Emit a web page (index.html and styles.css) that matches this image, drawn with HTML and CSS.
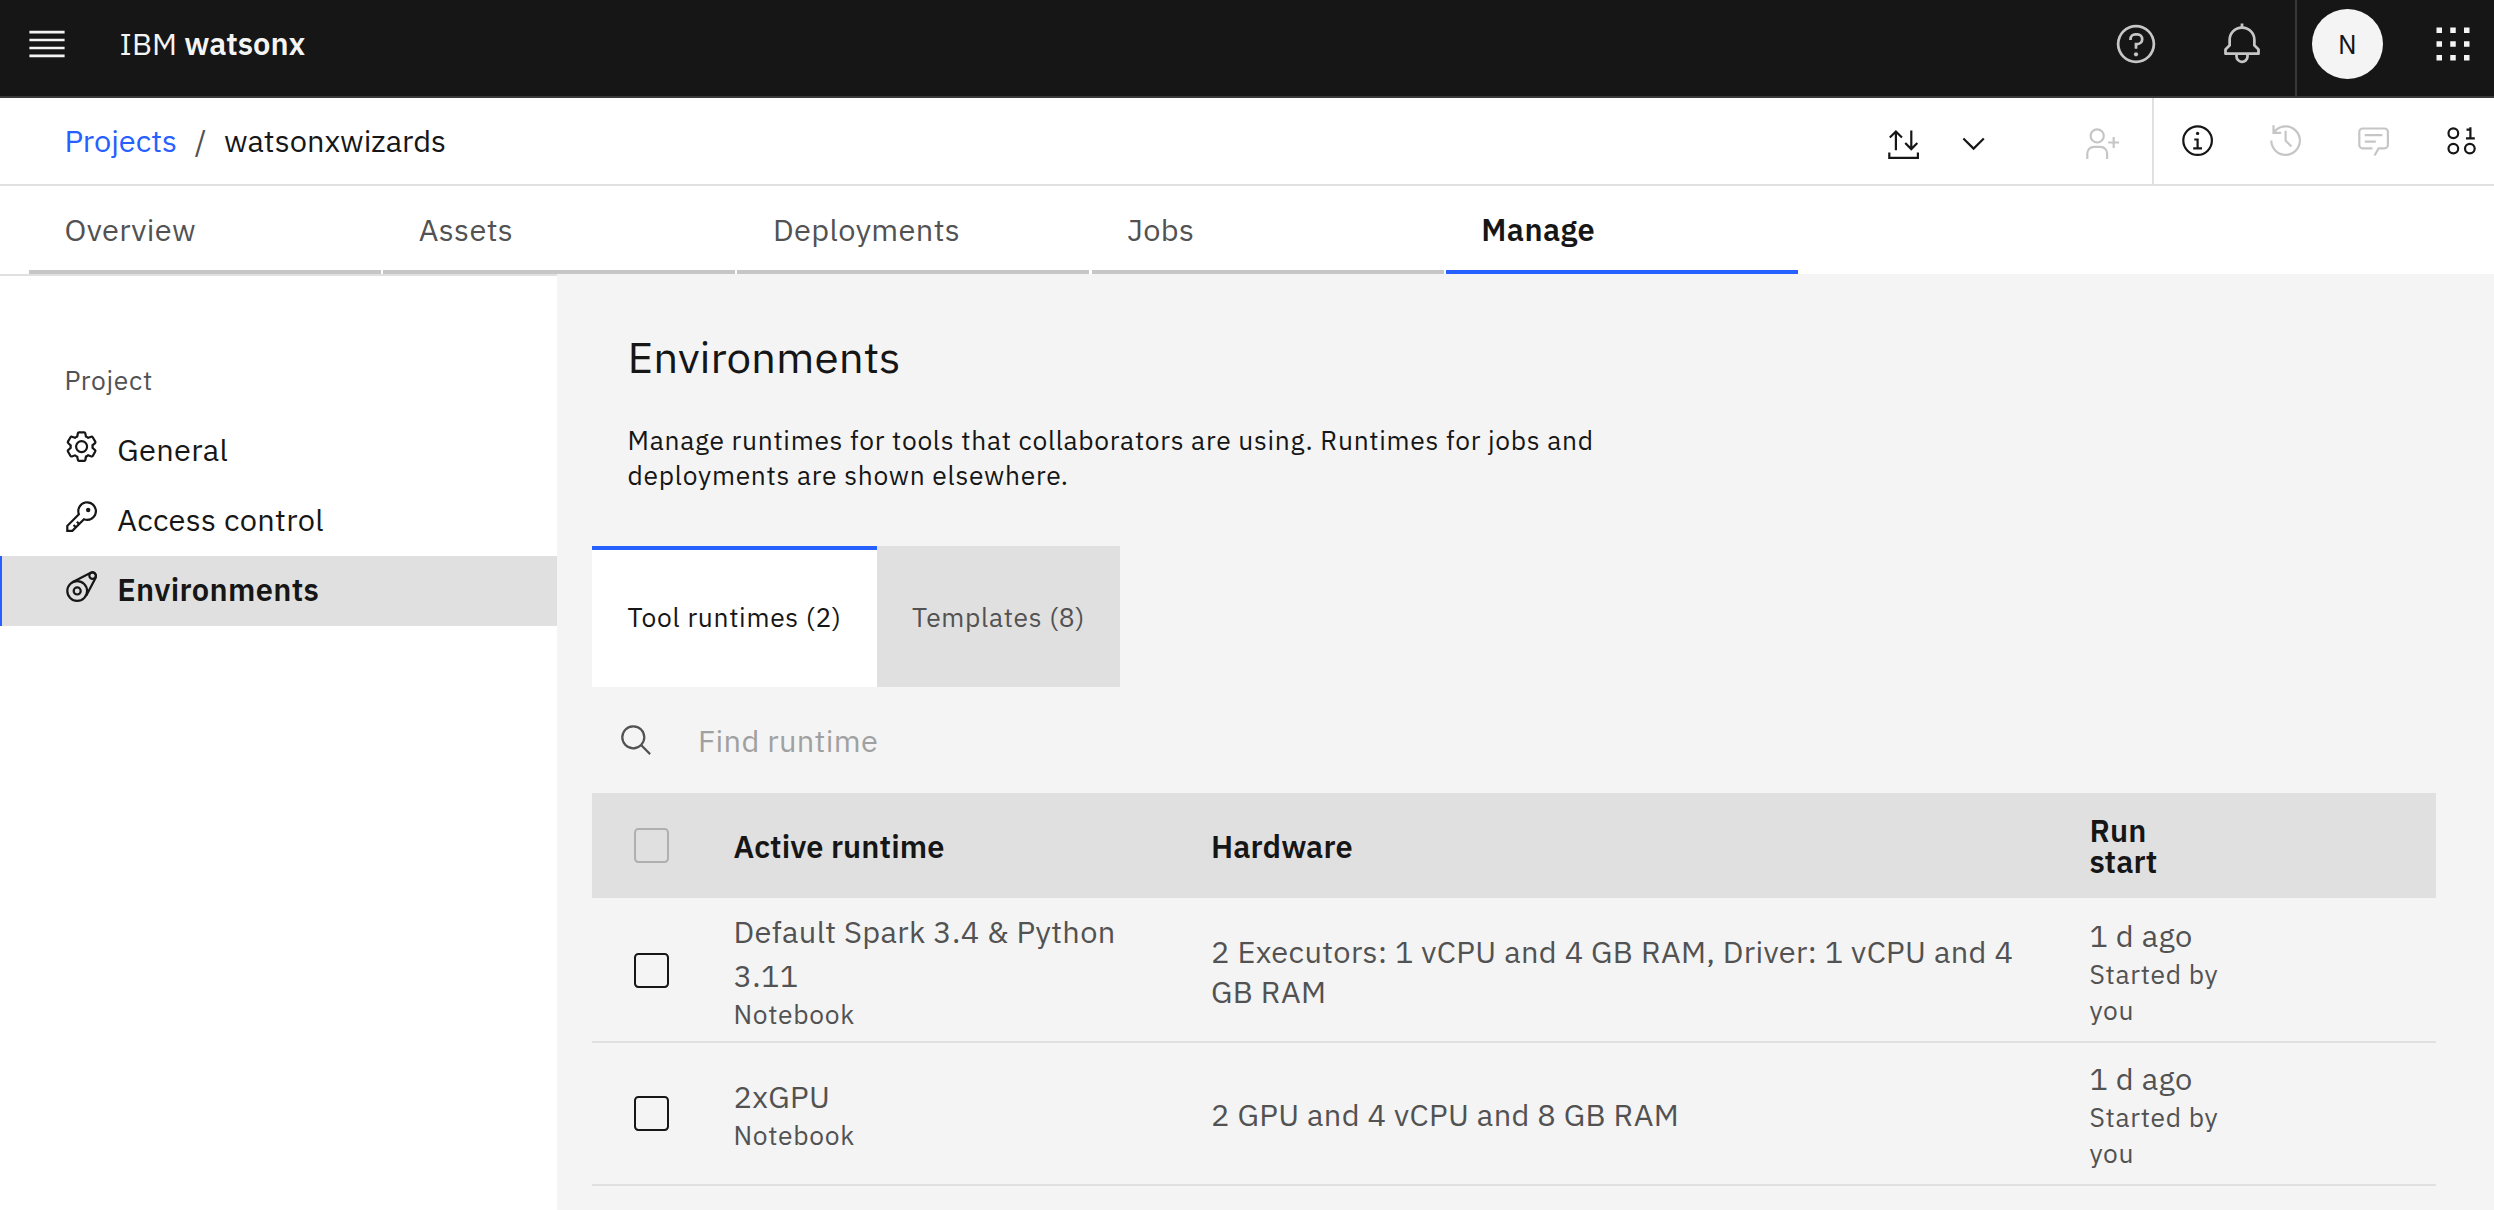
FILE: index.html
```html
<!DOCTYPE html>
<html lang="en">
<head>
<meta charset="utf-8">
<title>watsonxwizards – Environments</title>
<link rel="stylesheet" href="styles.css">
</head>
<body>
<header class="topbar">
  <svg class="icon-lg menu" viewBox="0 0 20 20"><path d="M2 4h16v1.2H2zM2 7.6h16v1.2H2zM2 11.2h16v1.2H2zM2 14.8h16V16H2z"/></svg>
  <div class="brand">IBM <b>watsonx</b></div>
  <div class="topbar-actions">
    <div class="top-cell muted"><svg class="icon-lg" viewBox="0 0 32 32"><path d="M16,2A14,14,0,1,0,30,16,14,14,0,0,0,16,2Zm0,26A12,12,0,1,1,28,16,12,12,0,0,1,16,28Z"/><circle cx="16" cy="23.5" r="1.5"/><path d="M17,8H15.5A4.49,4.49,0,0,0,11,12.5V13h2v-.5A2.5,2.5,0,0,1,15.5,10H17a2.5,2.5,0,0,1,0,5H15v4.5h2V17a4.5,4.5,0,0,0,0-9Z"/></svg></div>
    <div class="top-cell muted"><svg class="icon-lg" viewBox="0 0 32 32"><path d="M28.7071,19.293,26,16.5859V13a10.0136,10.0136,0,0,0-9-9.9492V1H15V3.0508A10.0136,10.0136,0,0,0,6,13v3.5859L3.2929,19.293A1,1,0,0,0,3,20v3a1,1,0,0,0,1,1h7v.7768a5.152,5.152,0,0,0,4.5,5.1987A5.0057,5.0057,0,0,0,21,25V24h7a1,1,0,0,0,1-1V20A1,1,0,0,0,28.7071,19.293ZM19,25a3,3,0,0,1-6,0V24h6Zm8-3H5V20.4141L7.707,17.707A1,1,0,0,0,8,17V13a8,8,0,0,1,16,0v4a1,1,0,0,0,.293.707L27,20.4141Z"/></svg></div>
    <div class="top-cell profile"><span class="avatar">N</span></div>
    <div class="top-cell apps"><svg class="icon-lg" viewBox="0 0 32 32"><path d="M4 4h4v4H4zM14 4h4v4h-4zM24 4h4v4h-4zM4 14h4v4H4zM14 14h4v4h-4zM24 14h4v4h-4zM4 24h4v4H4zM14 24h4v4h-4zM24 24h4v4h-4z"/></svg></div>
  </div>
</header>

<div class="breadcrumb-bar">
  <nav class="breadcrumb"><a>Projects</a><span class="slash">/</span><span>watsonxwizards</span></nav>
  <div class="tools">
    <svg class="icon line" viewBox="0 0 32 32"><path d="M9 22V5M3.5 10.5 9 5l5.5 5.5M23 4v17M17.5 15.5 23 21l5.5-5.5M3 24v5h26v-5"/></svg>
    <svg class="icon" viewBox="0 0 32 32"><path d="M16 22 6 12l1.4-1.4L16 19.2l8.6-8.6L26 12z"/></svg>
    <svg class="icon follow disabled" viewBox="0 0 32 32"><path d="M32 14h-4v-4h-2v4h-4v2h4v4h2v-4h4zM12,4A5,5,0,1,1,7,9a5,5,0,0,1,5-5m0-2a7,7,0,1,0,7,7A7,7,0,0,0,12,2ZM22,30H20V25a5,5,0,0,0-5-5H9a5,5,0,0,0-5,5v5H2V25a7,7,0,0,1,7-7h6a7,7,0,0,1,7,7Z"/></svg>
  </div>
  <div class="panels">
    <svg class="icon" viewBox="0 0 32 32"><path d="M17 22v-8h-4v2h2v6h-3v2h8v-2z"/><circle cx="16" cy="9.5" r="1.5"/><path d="M16,30A14,14,0,1,1,30,16,14,14,0,0,1,16,30ZM16,4A12,12,0,1,0,28,16,12,12,0,0,0,16,4Z"/></svg>
    <svg class="icon disabled" viewBox="0 0 32 32"><path d="M20.59 22 15 16.41V7h2v8.58l5 5.01z"/><path d="M16,2A13.94,13.94,0,0,0,6,6.23V2H4v8h8V8H7.08A12,12,0,1,1,4,16H2A14,14,0,1,0,16,2Z"/></svg>
    <svg class="icon disabled" viewBox="0 0 32 32"><path d="M17.74,30,16,29l4-7h6a2,2,0,0,0,2-2V8a2,2,0,0,0-2-2H6A2,2,0,0,0,4,8V20a2,2,0,0,0,2,2h9v2H6a4,4,0,0,1-4-4V8A4,4,0,0,1,6,4H26a4,4,0,0,1,4,4V20a4,4,0,0,1-4,4H21.16ZM8 10h16v2H8zM8 16h10v2H8z"/></svg>
    <svg class="icon line" viewBox="0 0 32 32"><circle cx="8.5" cy="9.3" r="4.4"/><circle cx="8.5" cy="23.3" r="4.4"/><circle cx="23.5" cy="23.3" r="4.4"/><path d="M24 3.8V14M20.5 6H24M20 14h8"/></svg>
  </div>
</div>

<nav class="tabs">
  <a class="tab">Overview</a><a class="tab">Assets</a><a class="tab">Deployments</a><a class="tab">Jobs</a><a class="tab active">Manage</a>
</nav>

<div class="layout">
  <aside class="sidebar">
    <div class="side-title">Project</div>
    <a class="side-item"><svg class="icon" viewBox="0 0 32 32"><path d="M27,16.76c0-.25,0-.5,0-.76s0-.51,0-.77l1.92-1.68A2,2,0,0,0,29.3,11L26.94,7a2,2,0,0,0-1.73-1,2,2,0,0,0-.64.1l-2.43.82a11.35,11.35,0,0,0-1.31-.75l-.51-2.52a2,2,0,0,0-2-1.61H13.64a2,2,0,0,0-2,1.61l-.51,2.52a11.48,11.48,0,0,0-1.32.75L7.43,6.06A2,2,0,0,0,6.79,6,2,2,0,0,0,5.06,7L2.7,11a2,2,0,0,0,.41,2.51L5,15.24c0,.25,0,.5,0,.76s0,.51,0,.77L3.11,18.45A2,2,0,0,0,2.7,21L5.06,25a2,2,0,0,0,1.73,1,2,2,0,0,0,.64-.1l2.43-.82a11.35,11.35,0,0,0,1.31.75l.51,2.52a2,2,0,0,0,2,1.61h4.72a2,2,0,0,0,2-1.61l.51-2.52a11.48,11.48,0,0,0,1.32-.75l2.42.82a2,2,0,0,0,.64.1,2,2,0,0,0,1.73-1L29.3,21a2,2,0,0,0-.41-2.51ZM25.21,24l-3.43-1.16a8.86,8.86,0,0,1-2.71,1.57L18.36,28H13.64l-.71-3.55a9.36,9.36,0,0,1-2.7-1.57L6.79,24,4.43,20l2.72-2.4a8.9,8.9,0,0,1,0-3.13L4.43,12,6.79,8l3.43,1.16a8.86,8.86,0,0,1,2.71-1.57L13.64,4h4.72l.71,3.55a9.36,9.36,0,0,1,2.7,1.57L25.21,8,27.57,12l-2.72,2.4a8.9,8.9,0,0,1,0,3.13L27.57,20Z"/><path d="M16,22a6,6,0,1,1,6-6A5.94,5.94,0,0,1,16,22Zm0-10a3.91,3.91,0,0,0-4,4,3.91,3.91,0,0,0,4,4,3.91,3.91,0,0,0,4-4A3.91,3.91,0,0,0,16,12Z"/></svg>General</a>
    <a class="side-item"><svg class="icon" viewBox="0 0 32 32"><path d="M21,2a8.9977,8.9977,0,0,0-8.6119,11.6118L2,24v6H8L18.3881,19.6118A9,9,0,1,0,21,2Zm0,16a7.0125,7.0125,0,0,1-2.0322-.3022L17.821,17.35l-.8472.8472-3.1811,3.1812L12.4141,20,11,21.4141l1.3787,1.3786-1.5859,1.586L9.4141,23,8,24.4141l1.3787,1.3786L7.1716,28H4V24.8284l9.8023-9.8023.8472-.8474-.3473-1.1467A7,7,0,1,1,21,18Z"/><circle cx="22" cy="10" r="2"/></svg>Access control</a>
    <a class="side-item selected"><svg class="icon line" viewBox="0 0 32 32"><circle cx="12" cy="20" r="9"/><circle cx="12" cy="20" r="3.2"/><circle cx="26" cy="6" r="3"/><path d="M8 11.9 24.3 3.4a3.5 3.5 0 0 1 4.6 4.4L20.3 24"/></svg>Environments</a>
  </aside>

  <main class="main">
    <h1>Environments</h1>
    <p class="intro">Manage runtimes for tools that collaborators are using. Runtimes for jobs and deployments are shown elsewhere.</p>
    <div class="switch">
      <a class="switch-tab current">Tool runtimes (2)</a><a class="switch-tab">Templates (8)</a>
    </div>
    <div class="search">
      <svg class="icon" viewBox="0 0 32 32"><path d="M29,27.5859l-7.5521-7.5521a11.0177,11.0177,0,1,0-1.4141,1.4141L27.5859,29ZM4,13a9,9,0,1,1,9,9A9.01,9.01,0,0,1,4,13Z"/></svg>
      <span>Find runtime</span>
    </div>
    <div class="table">
      <div class="row head">
        <span class="check off"></span><div class="c-name">Active runtime</div><div class="c-hw">Hardware</div><div class="c-start">Run start</div>
      </div>
      <div class="row first">
        <span class="check"></span>
        <div class="c-name">Default Spark 3.4 &amp; Python 3.11<small>Notebook</small></div>
        <div class="c-hw">2 Executors: 1 vCPU and 4 GB RAM, Driver: 1 vCPU and 4 GB RAM</div>
        <div class="c-start">1 d ago<small>Started by you</small></div>
      </div>
      <div class="row">
        <span class="check"></span>
        <div class="c-name">2xGPU<small>Notebook</small></div>
        <div class="c-hw">2 GPU and 4 vCPU and 8 GB RAM</div>
        <div class="c-start">1 d ago<small>Started by you</small></div>
      </div>
    </div>
  </main>
</div>
</body>
</html>
```
FILE: styles.css
```css
* { box-sizing: border-box; }

body {
  margin: 0;
  width: 2494px;
  height: 1210px;
  overflow: hidden;
  display: flex;
  flex-direction: column;
  background: #fff;
  color: #161616;
  font: 400 30.8px/40px "IBM Plex Sans", Roboto, sans-serif;
  letter-spacing: 0.352px;
}

.icon { width: 35.2px; height: 35.2px; flex: none; fill: currentColor; }
.icon-lg { width: 44px; height: 44px; flex: none; fill: currentColor; }
.line { fill: none; stroke: currentColor; stroke-width: 2; }
.disabled { color: #c6c6c6; }

/* Global header */
.topbar {
  height: 98px;
  flex: none;
  display: flex;
  align-items: center;
  padding: 0 0 8px 24.6px;
  background: #161616;
  border-bottom: 2px solid #393939;
  color: #f4f4f4;
}
.brand { margin-left: 51px; padding-bottom: 2px; letter-spacing: 0; }
.brand b { font-weight: 600; }
.topbar-actions { margin-left: auto; display: flex; height: 96px; margin-bottom: -8px; }
.top-cell {
  width: 105.6px;
  padding-bottom: 8px;
  display: flex;
  align-items: center;
  justify-content: center;
}
.muted { color: #c6c6c6; }
.profile { border-left: 2px solid #393939; padding-right: 2px; }
.avatar {
  width: 71px;
  height: 70.4px;
  border-radius: 50%;
  background: #f4f4f4;
  color: #161616;
  font-size: 26.4px;
  line-height: 70.4px;
  text-align: center;
}
.apps { width: 93.6px; justify-content: flex-start; padding-left: 30.8px; }

/* Breadcrumb row */
.breadcrumb-bar {
  height: 88px;
  flex: none;
  display: flex;
  border-bottom: 2px solid #e0e0e0;
  letter-spacing: 0;
}
.breadcrumb { display: flex; align-items: center; padding: 0 0 2px 64.4px; }
.breadcrumb a { color: #2660ff; }
.slash { padding: 0 17.6px; color: #525252; }
.tools {
  margin-left: auto;
  display: flex;
  align-items: center;
  gap: 34px;
  padding: 5px 32.6px 0 0;
}
.tools .line { margin-right: 1px; }
.follow { margin-left: 59.2px; }
.panels {
  width: 342px;
  border-left: 2px solid #e0e0e0;
  display: flex;
  align-items: center;
  gap: 52.8px;
  padding-left: 26px;
}

/* Project tabs */
.tabs { height: 88px; flex: none; display: flex; gap: 2.2px; padding-left: 29px; }
.tab {
  width: 352px;
  padding: 23.4px 35.6px 0;
  border-bottom: 4px solid #c6c6c6;
  color: #525252;
}
.active { color: #161616; font-weight: 600; border-color: #2660ff; }

.layout { flex: 1; display: flex; min-height: 0; }

/* Side navigation */
.sidebar { width: 557px; flex: none; border-top: 2px solid #e0e0e0; padding-top: 86px; }
.side-title {
  height: 54px;
  padding-left: 64.4px;
  font-size: 26.4px;
  line-height: 36px;
  letter-spacing: 0.704px;
  color: #525252;
}
.side-item {
  height: 70px;
  display: flex;
  align-items: center;
  gap: 18.2px;
  padding: 0 0 5px 63.8px;
}
.side-item .icon { margin-top: -3px; }
.selected {
  background: #e0e0e0;
  font-weight: 600;
  border-left: 2px solid #2660ff;
  padding-left: 61.8px;
}

/* Content */
.main { flex: 1; background: #f4f4f4; padding: 52.5px 58px 0 35px; }
h1 {
  margin: 0 0 36.5px 35.6px;
  font-size: 44px;
  font-weight: 400;
  line-height: 60px;
  letter-spacing: 0;
}
.intro {
  width: 1010px;
  height: 123px;
  margin: 0 0 0 35.6px;
  font-size: 26.4px;
  line-height: 35.2px;
  letter-spacing: 0.704px;
}
.switch { display: flex; height: 141px; }
.switch-tab {
  display: flex;
  align-items: center;
  justify-content: center;
  width: 243px;
  background: #e0e0e0;
  color: #525252;
  font-size: 26.4px;
  letter-spacing: 0.704px;
}
.current {
  width: 285px;
  background: #fff;
  color: #161616;
  border-top: 4.4px solid #2660ff;
  padding-bottom: 4px;
}
.search {
  height: 106px;
  display: flex;
  align-items: center;
  gap: 43.4px;
  padding-left: 27.4px;
  color: #525252;
}
.search .icon { margin-top: 1px; }
.search span { color: #a0a0a0; }

/* Runtime table */
.row {
  display: grid;
  grid-template-columns: 141.4px 477.6px 878.4px 1fr;
  align-items: center;
  height: 143px;
  border-bottom: 2px solid #e0e0e0;
  color: #525252;
}
.first { height: 145px; padding-top: 2px; }
.head {
  height: 105px;
  border: 0;
  background: #e0e0e0;
  color: #161616;
  font-weight: 600;
  letter-spacing: 0.1px;
}
.check {
  width: 35.2px;
  height: 35.2px;
  margin-left: 42px;
  border: 2.2px solid #161616;
  border-radius: 4.4px;
}
.off { border-color: #b0b0b0; }
.c-name { width: 440px; line-height: 44px; }
.c-hw { width: 844px; }
.c-start { width: 135px; line-height: 44px; }
.head .c-start { width: 90px; line-height: 30.8px; }
small {
  display: block;
  font-size: 26.4px;
  line-height: 35.2px;
  letter-spacing: 0.704px;
}
```
